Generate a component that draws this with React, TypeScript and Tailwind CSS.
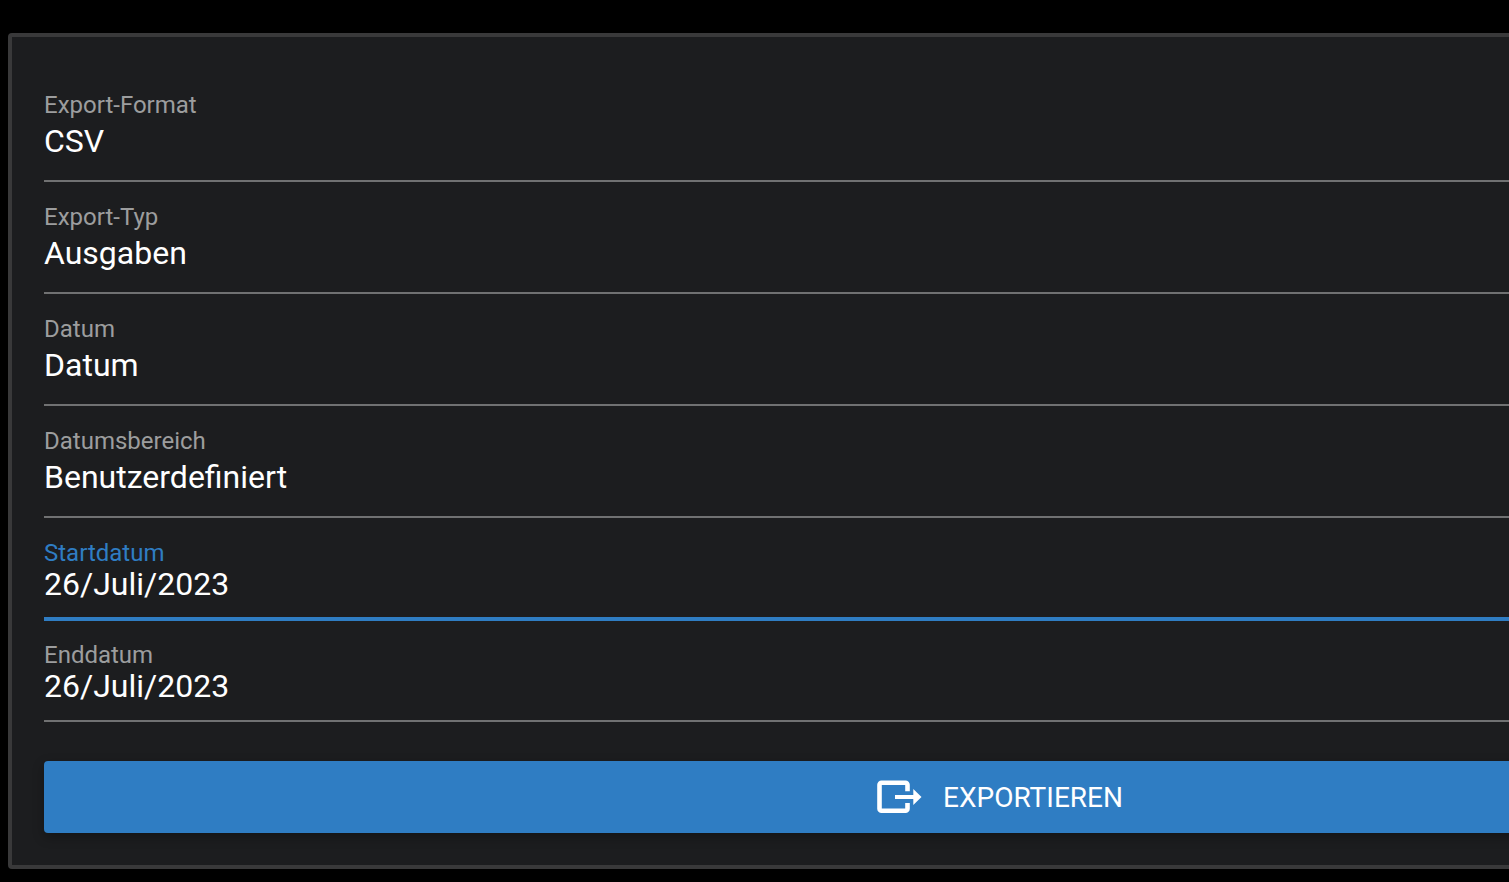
import { useState } from "react"
import { clsx } from "clsx"

type SelectField = { id: string; label: string; options: string[] }

const SELECTS: SelectField[] = [
  { id: "format", label: "Export-Format", options: ["CSV", "XLSX"] },
  { id: "type", label: "Export-Typ", options: ["Ausgaben", "Rechnungen", "Kunden"] },
  { id: "date", label: "Datum", options: ["Datum", "Zahlungsdatum"] },
  { id: "range", label: "Datumsbereich", options: ["Benutzerdefiniert", "Letzte 7 Tage"] },
]

const DATES = [
  { id: "start", label: "Startdatum" },
  { id: "end", label: "Enddatum" },
]

function ExportIcon() {
  return (
    <svg width="46" height="34" viewBox="0 0 46 34" fill="none" aria-hidden="true">
      <path d="M30.500 11.200V4.700a2 2 0 0 0-2-2h-24a2 2 0 0 0-2 2v24a2 2 0 0 0 2 2h24a2 2 0 0 0 2-2v-5.700" stroke="currentColor" strokeWidth="4.600" />
      <path d="M18 15h18.300V9l8.200 8-8.200 8v-6H18z" fill="currentColor" />
    </svg>
  )
}

export default function App() {
  const [active, setActive] = useState("start")
  const [dates, setDates] = useState<Record<string, string>>({ start: "26/Juli/2023", end: "26/Juli/2023" })

  return (
    <main className="min-h-screen overflow-hidden bg-black pt-[33px] pb-3 font-[Roboto,sans-serif] text-white">
      {/* The panel is wider than the viewport and runs off its right edge */}
      <form onSubmit={(e) => e.preventDefault()} className="ml-2 -mr-[483px] rounded border-4 border-[#39393a] bg-[#1c1d1f] px-8 pt-[33px] pb-8">
        {SELECTS.map((f) => (
          <div key={f.id} className="flex flex-col border-b-2 border-[#707172] pt-[21px] pb-[19px]">
            <label htmlFor={f.id} className="text-2xl leading-7 text-[#9c9d9e]">{f.label}</label>
            <select id={f.id} className="mt-0.5 h-10 w-full appearance-none bg-transparent text-[32px] leading-10 outline-none">
              {f.options.map((o) => (
                <option key={o} className="bg-[#1c1d1f]">{o}</option>
              ))}
            </select>
          </div>
        ))}

        {DATES.map((f) => {
          const on = active === f.id
          return (
            <div key={f.id} className={clsx("flex flex-col", on ? "border-b-4 border-[#2f7dc3] pt-[21px] pb-[17px]" : "border-b-2 border-[#707172] pt-5 pb-[18px]")}>
              <label htmlFor={f.id} className={clsx("text-2xl leading-7", on ? "text-[#2f7dc3]" : "text-[#9c9d9e]")}>{f.label}</label>
              <input
                id={f.id}
                type="text"
                value={dates[f.id]}
                onFocus={() => setActive(f.id)}
                onChange={(e) => setDates({ ...dates, [f.id]: e.target.value })}
                className="mt-px h-8 w-full bg-transparent text-[32px] leading-8 outline-none"
              />
            </div>
          )
        })}

        <button type="submit" className="mt-[39px] flex h-[72px] w-full items-center justify-center gap-5 rounded bg-[#2f7dc3] text-[28px] shadow-[0_4px_12px_rgba(0,0,0,0.3)]">
          <ExportIcon />
          <span className="pt-0.5">EXPORTIEREN</span>
        </button>
      </form>
    </main>
  )
}
